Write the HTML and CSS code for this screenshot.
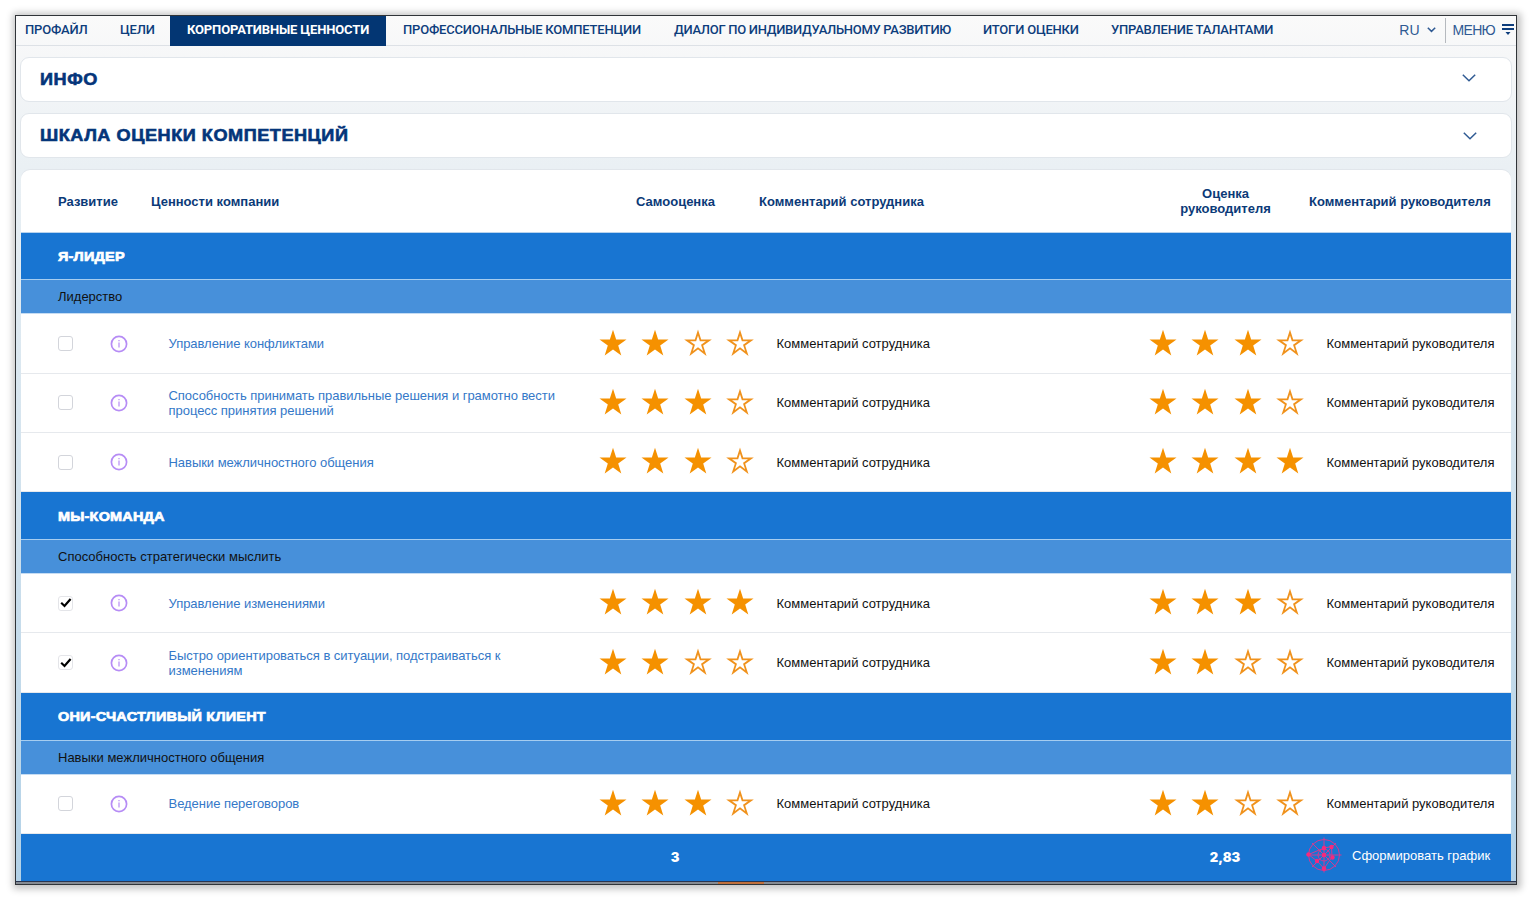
FILE: index.html
```html
<!DOCTYPE html>
<html lang="ru">
<head>
    <meta charset="UTF-8">
    <meta name="viewport" content="width=device-width, initial-scale=1.0">
    <title>Корпоративные ценности</title>
    <link rel="stylesheet" href="styles.css">
</head>
<body>
    <div class="window">
        <!-- Top navigation -->
        <nav class="topbar">
            <a class="tab tab-profile">ПРОФАЙЛ</a>
            <a class="tab tab-goals">ЦЕЛИ</a>
            <a class="tab tab-values active">КОРПОРАТИВНЫЕ ЦЕННОСТИ</a>
            <a class="tab tab-skills">ПРОФЕССИОНАЛЬНЫЕ КОМПЕТЕНЦИИ</a>
            <a class="tab tab-dialog">ДИАЛОГ ПО ИНДИВИДУАЛЬНОМУ РАЗВИТИЮ</a>
            <a class="tab tab-results">ИТОГИ ОЦЕНКИ</a>
            <a class="tab tab-talents">УПРАВЛЕНИЕ ТАЛАНТАМИ</a>
            <div class="tools">
                <span class="lang">RU</span>
                <svg class="lang-arrow" viewBox="0 0 9 6"><path d="M0.8 0.8L4.5 4.4L8.2 0.8"/></svg>
                <span class="menu">МЕНЮ</span>
                <svg class="menu-icon" viewBox="0 0 12 12"><path d="M0 1H12M0 5H12"/><path class="tip" d="M3.5 8H8.5L6 11Z"/></svg>
            </div>
        </nav>

        <!-- Collapsed panels -->
        <section class="panel">
            <h2>ИНФО</h2>
            <svg class="chevron" viewBox="0 0 14 8"><path d="M0.8 0.8L7 6.8L13.2 0.8"/></svg>
        </section>
        <section class="panel">
            <h2>ШКАЛА ОЦЕНКИ КОМПЕТЕНЦИЙ</h2>
            <svg class="chevron chevron-low" viewBox="0 0 14 8"><path d="M0.8 0.8L7 6.8L13.2 0.8"/></svg>
        </section>

        <!-- Values table -->
        <table class="values">
            <colgroup>
                <col class="c-dev"><col class="c-info"><col class="c-name"><col class="c-score">
                <col class="c-comment"><col class="c-score"><col class="c-last">
            </colgroup>
            <thead>
                <tr>
                    <th colspan="2" class="first">Развитие</th>
                    <th>Ценности компании</th>
                    <th class="center">Самооценка</th>
                    <th>Комментарий сотрудника</th>
                    <th class="center">Оценка<br>руководителя</th>
                    <th>Комментарий руководителя</th>
                </tr>
            </thead>
            <tbody>
                <tr class="group"><td colspan="7"><span>Я-ЛИДЕР</span></td></tr>
                <tr class="subgroup"><td colspan="7">Лидерство</td></tr>
                <tr class="item">
                    <td class="dev"><span class="check"></span></td>
                    <td class="info"></td>
                    <td><a>Управление конфликтами</a></td>
                    <td class="stars" data-score="2"></td>
                    <td>Комментарий сотрудника</td>
                    <td class="stars" data-score="3"></td>
                    <td>Комментарий руководителя</td>
                </tr>
                <tr class="item">
                    <td class="dev"><span class="check"></span></td>
                    <td class="info"></td>
                    <td><a>Способность принимать правильные решения и грамотно вести<br>процесс принятия решений</a></td>
                    <td class="stars" data-score="3"></td>
                    <td>Комментарий сотрудника</td>
                    <td class="stars" data-score="3"></td>
                    <td>Комментарий руководителя</td>
                </tr>
                <tr class="item">
                    <td class="dev"><span class="check"></span></td>
                    <td class="info"></td>
                    <td><a>Навыки межличностного общения</a></td>
                    <td class="stars" data-score="3"></td>
                    <td>Комментарий сотрудника</td>
                    <td class="stars" data-score="4"></td>
                    <td>Комментарий руководителя</td>
                </tr>

                <tr class="group"><td colspan="7"><span>МЫ-КОМАНДА</span></td></tr>
                <tr class="subgroup"><td colspan="7">Способность стратегически мыслить</td></tr>
                <tr class="item">
                    <td class="dev"><span class="check checked"></span></td>
                    <td class="info"></td>
                    <td><a>Управление изменениями</a></td>
                    <td class="stars" data-score="4"></td>
                    <td>Комментарий сотрудника</td>
                    <td class="stars" data-score="3"></td>
                    <td>Комментарий руководителя</td>
                </tr>
                <tr class="item">
                    <td class="dev"><span class="check checked"></span></td>
                    <td class="info"></td>
                    <td><a>Быстро ориентироваться в ситуации, подстраиваться к<br>изменениям</a></td>
                    <td class="stars" data-score="2"></td>
                    <td>Комментарий сотрудника</td>
                    <td class="stars" data-score="2"></td>
                    <td>Комментарий руководителя</td>
                </tr>

                <tr class="group"><td colspan="7"><span>ОНИ-СЧАСТЛИВЫЙ КЛИЕНТ</span></td></tr>
                <tr class="subgroup"><td colspan="7">Навыки межличностного общения</td></tr>
                <tr class="item">
                    <td class="dev"><span class="check"></span></td>
                    <td class="info"></td>
                    <td><a>Ведение переговоров</a></td>
                    <td class="stars" data-score="3"></td>
                    <td>Комментарий сотрудника</td>
                    <td class="stars" data-score="2"></td>
                    <td>Комментарий руководителя</td>
                </tr>
            </tbody>
            <tfoot>
                <tr>
                    <td colspan="3"></td>
                    <td class="total">3</td>
                    <td></td>
                    <td class="total">2,83</td>
                    <td class="chart-cell">
                        <div class="chart-link">
                            <svg class="radar" viewBox="0 0 36 36">
                                <circle cx="18" cy="18" r="15.5"/>
                                <circle cx="18" cy="18" r="6"/>
                                <path d="M18 0.5V35.5M0.5 18H35.5M6 6L30 30M30 6L6 30"/>
                                <path d="M2.5 17.5L18 11L25.5 9.5L26 20L18 31.5L11 24Z"/>
                                <g class="dots">
                                    <circle cx="2.5" cy="17.5" r="2.2"/>
                                    <circle cx="18" cy="11" r="2.2"/>
                                    <circle cx="25.5" cy="10" r="2.2"/>
                                    <circle cx="18" cy="18" r="2.2"/>
                                    <circle cx="26.5" cy="20.5" r="2.2"/>
                                    <circle cx="11" cy="24" r="2.2"/>
                                    <circle cx="18" cy="31.5" r="2.2"/>
                                </g>
                            </svg>
                            <span>Сформировать график</span>
                        </div>
                    </td>
                </tr>
            </tfoot>
        </table>
        <div class="bottom-edge"></div>
    </div>

    <script>
        const STAR = 'M14 0.8L17.15 10.5H27.5L19.2 16.6L22.3 26.5L14 20.5L5.7 26.5L8.8 16.6L0.5 10.5H10.85Z';
        const EMPTY = 'M14 3.4L16.5 11.3H25L18.1 16.2L20.8 24.5L14 19.4L7.2 24.5L9.9 16.2L3 11.3H11.5Z';

        // Fill every score cell with four stars
        document.querySelectorAll('.stars').forEach(cell => {
            const score = Number(cell.dataset.score);
            let html = '';
            for (let i = 1; i <= 4; i++) {
                const full = i <= score;
                html += '<svg class="star ' + (full ? 'full' : 'empty') + '" viewBox="0 0 28 28"><path d="' + (full ? STAR : EMPTY) + '"/></svg>';
            }
            cell.innerHTML = '<div class="star-row">' + html + '</div>';
        });

        document.querySelectorAll('td.info').forEach(cell => {
            cell.innerHTML = '<svg class="info-icon" viewBox="0 0 18 18"><circle cx="9" cy="9" r="7.6"/><path class="mark" d="M9 7.5V12.5M9 5V6.3"/></svg>';
        });

        document.querySelectorAll('.checked').forEach(box => {
            box.innerHTML = '<svg viewBox="0 0 12 12"><path d="M1.2 5.8L4.5 9L10.6 2"/></svg>';
        });
    </script>
</body>
</html>
```
FILE: styles.css
```css
* {
    box-sizing: border-box;
}
body {
    margin: 0;
    padding: 15px;
    background-color: #fff;
    font-family: "Liberation Sans", Arial, sans-serif;
    font-size: 13px;
    color: #111;
}
.window {
    width: 1502px;
    height: 870px;
    border: 1px solid #303438;
    background: linear-gradient(#fafafa 0, #f6f7f8 40px, #eaf0f4 150px, #d3e3ee 450px, #b2d1e7 870px);
    box-shadow: 1px 1px 7px 3px rgba(0, 0, 0, 0.24);
    overflow: hidden;
}

/* Navigation */
.topbar {
    display: flex;
    height: 30px;
    border-bottom: 1px solid #dde1e6;
    padding-left: 9px;
}
.tab {
    height: 30px;
    line-height: 27px;
    font-family: Roboto, sans-serif;
    font-size: 13px;
    font-weight: 500;
    letter-spacing: -0.2px;
    color: #0d3d7c;
    white-space: nowrap;
}
.tab-profile { width: 95px; }
.tab-goals { width: 50px; }
.tab-values { width: 216px; padding-left: 17px; }
.tab-skills { width: 288px; padding-left: 17px; }
.tab-dialog { width: 309px; letter-spacing: -0.3px; }
.tab-results { width: 128px; }
.tab.active {
    background-color: #033673;
    color: #fff;
    font-weight: 700;
    letter-spacing: -0.15px;
}
.tools {
    display: flex;
    align-items: center;
    height: 28px;
    margin-left: auto;
    color: #2f5a93;
    font-size: 14px;
}
.tools svg, .chevron {
    fill: none;
    stroke: #2f5a93;
    stroke-width: 1.5;
}
.lang-arrow {
    width: 9px;
    height: 6px;
    margin: 0 9px 0 7px;
}
.menu {
    border-left: 1px solid #b5b9be;
    padding-left: 7px;
    line-height: 25px;
    letter-spacing: -0.7px;
}
.tools .menu-icon {
    width: 12px;
    height: 12px;
    margin: 0 2px 0 7px;
    stroke: #0d3d7c;
    stroke-width: 2;
}
.menu-icon .tip {
    fill: #0d3d7c;
    stroke: none;
}

/* Panels */
.panel {
    display: flex;
    align-items: center;
    justify-content: space-between;
    width: 1492px;
    height: 45px;
    margin: 11px 0 0 4px;
    padding: 0 35px 0 19px;
    background-color: #fff;
    border: 1px solid #e1e6eb;
    border-radius: 9px;
}
.panel h2 {
    margin: 0;
    font-size: 17px;
    font-weight: 700;
    letter-spacing: 0.5px;
    color: #04357a;
    -webkit-text-stroke: 0.6px #04357a;
    transform: scaleX(1.065);
    transform-origin: left;
}
.chevron {
    width: 14px;
    height: 8px;
    margin-bottom: 3px;
}
.chevron-low {
    margin: 1px -1px 0 0;
}

/* Table */
.values {
    width: 1490px;
    margin: 12px 0 0 5px;
    table-layout: fixed;
    border-collapse: separate;
    border-spacing: 0;
    background-color: #fff;
    border-radius: 9px 9px 0 0;
    box-shadow: 0 -1px 0 #e1e6eb;
}
.c-dev { width: 76px; }
.c-info { width: 54px; }
.c-name { width: 440px; }
.c-score { width: 168px; }
.c-comment { width: 382px; }
.c-last { width: 202px; }
.values th, .values td {
    padding: 0;
    text-align: left;
    line-height: 15px;
}
.values th {
    height: 62.6px;
    padding-top: 1px;
    color: #0b3a78;
    border-bottom: 1px solid #b7d3ee;
}
.values .first, .values .group td, .values .subgroup td {
    padding-left: 37px;
}
.values .center {
    padding-left: 1px;
    text-align: center;
}
.values .group td {
    height: 47.9px;
    padding-top: 1px;
    background-color: #1875d2;
    border-bottom: 1px solid #a6cdf0;
    font-weight: 700;
    color: #fff;
}
.group span {
    display: inline-block;
    letter-spacing: 0.2px;
    -webkit-text-stroke: 0.7px #fff;
    transform: scaleX(1.11);
    transform-origin: left;
}
.subgroup td {
    height: 34px;
    background-color: #4790da;
    border-bottom: 1px solid #c5dcf3;
}
.item td {
    height: 59.25px;
    padding-left: 17.5px;
    border-bottom: 1px solid #e6e9ed;
    white-space: nowrap;
}
.item a {
    color: #3478c8;
    letter-spacing: -0.04px;
}
.item .dev {
    padding-left: 37px;
}
.item .info {
    padding-left: 13px;
}
.check {
    display: flex;
    align-items: center;
    justify-content: center;
    width: 15px;
    height: 15px;
    border: 1px solid #d3d5db;
    border-radius: 3px;
}
.check svg {
    width: 12px;
    height: 12px;
    fill: none;
    stroke: #000;
    stroke-width: 2.2;
}
.check.checked {
    border-color: #e4e5e9;
}
.info-icon {
    display: block;
    width: 18px;
    height: 18px;
    fill: none;
    stroke: #b68cf5;
    stroke-width: 1.7;
}
.info-icon .mark {
    stroke-width: 1.2;
}
.item .stars {
    padding-left: 7.5px;
}
.star-row {
    display: flex;
    gap: 14.5px;
    margin-top: -2px;
}
.star {
    width: 28px;
    height: 28px;
}
.full {
    fill: #f59100;
}
.empty {
    fill: none;
    stroke: #f0921c;
    stroke-width: 1.8;
}

/* Totals */
.values tfoot td {
    height: 47px;
    background-color: #1875d2;
    color: #fff;
}
.values .total {
    text-align: center;
    font-family: Inter, sans-serif;
    font-weight: 900;
}
.chart-link {
    display: flex;
    align-items: center;
    gap: 10px;
    margin: -4px 0 0 -3px;
    white-space: nowrap;
}
.radar {
    width: 36px;
    height: 36px;
    fill: none;
    stroke: #d03a93;
    stroke-width: 1;
}
.radar .dots {
    fill: #f7297c;
    stroke: none;
}
.bottom-edge {
    height: 4px;
    border-top: 1px solid #2a3550;
    background: linear-gradient(90deg, transparent 702px, #c0703c 702px, #c0703c 748px, transparent 748px), #858b93;
}
```
